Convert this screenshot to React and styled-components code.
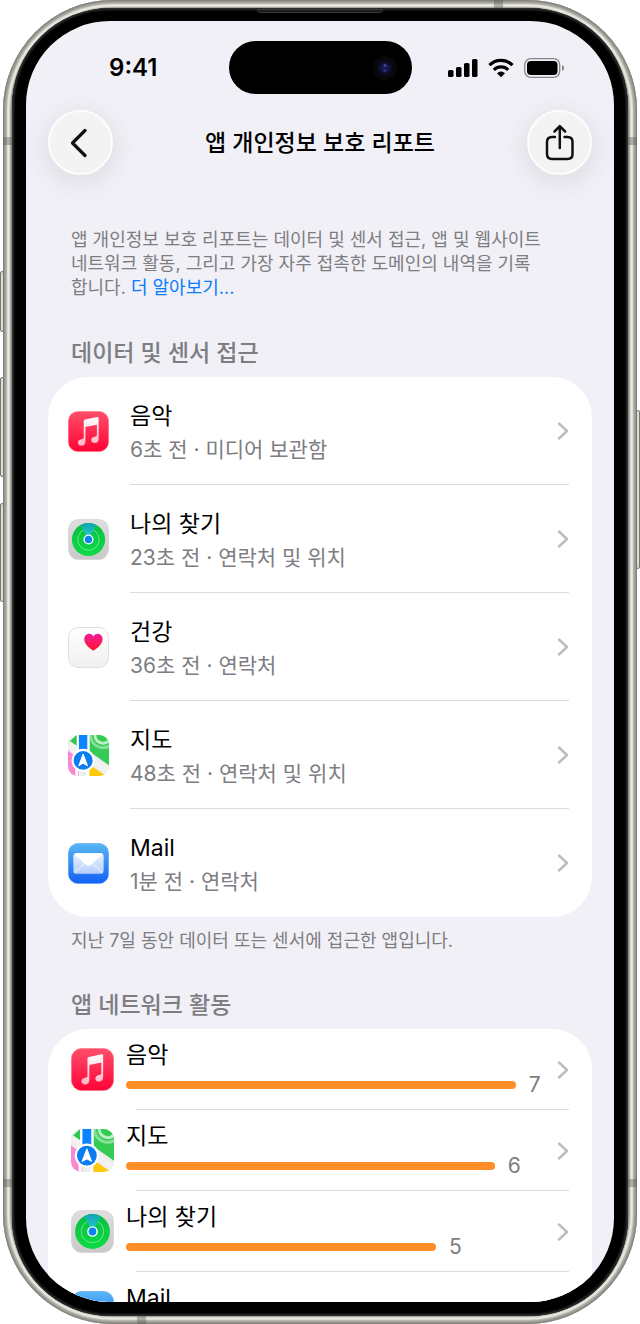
import React from 'react'
import styled, { createGlobalStyle } from 'styled-components';

const GlobalStyle = createGlobalStyle`
  * {
    box-sizing: border-box;
  }

  body {
    margin: 0;
    background: #ffffff;
    color: #000000;
    font-family: Inter, "Noto Sans CJK KR", sans-serif;
  }
`;

const Device = styled.div`
  position: relative;
  height: 100vh;
  min-height: 640px;
  margin: 0 3px;
  padding: 8px 9px;
  border-radius: 110px;
  background: #8b8a84;
  box-shadow: inset 0 0 2px 1px #77766f, inset 0 0 2px 4px #a3a29c, inset 0 0 2px 7px #f4f3ea;
`;

const Bezel = styled.div`
  height: 100%;
  padding: 13px 14px 14px;
  border-radius: 98px;
  background: #000000;
  box-shadow: inset 0 0 2px 2px #2c2e2c;
`;

const Screen = styled.div`
  height: 100%;
  padding: 0 22px;
  border-radius: 84px;
  background: #f1f0f6;
  overflow: hidden;
`;

const SideKey = styled.span`
  position: absolute;
  top: ${props => props.$top};
  ${props => props.$side}: -3px;
  width: 4px;
  height: ${props => props.$length};
  border: 1px solid #77766f;
  border-radius: 2px;
  background: #deddd5;
`;

const Antenna = styled.span`
  position: absolute;
  top: ${props => props.$top};
  bottom: ${props => props.$bottom};
  left: ${props => props.$left};
  right: ${props => props.$right};
  width: 9px;
  height: 8px;
  background: rgba(90, 90, 84, .4);
`;

const Speaker = styled.span`
  position: absolute;
  top: 9px;
  left: 40%;
  right: 40%;
  height: 4px;
  border: 1px solid #3a3a3a;
  border-radius: 0 0 3px 3px;
  background: #1b1b1b;
`;

const StatusBar = styled.div`
  display: grid;
  grid-template-columns: 1fr 183px 1fr;
  align-items: center;
  padding-top: 20px;
`;

const Time = styled.time`
  justify-self: center;
  padding-right: 10px;
  font-size: 24px;
  font-weight: 600;
  line-height: 32px;
`;

const Island = styled.div`
  display: flex;
  align-items: center;
  justify-content: flex-end;
  height: 53px;
  padding-right: 14px;
  border-radius: 27px;
  background: #000000;
`;

const StatusIcons = styled.div`
  display: flex;
  align-items: center;
  gap: 10px;
  justify-self: end;
  padding-right: 27px;
`;

const NavBar = styled.header`
  display: flex;
  align-items: center;
  justify-content: space-between;
  margin-top: 16px;
`;

const NavTitle = styled.h1`
  margin: 0;
  font-size: 23px;
  font-weight: 500;
  line-height: 34px;
`;

const RoundButton = styled.button`
  display: flex;
  align-items: center;
  justify-content: center;
  width: 65px;
  height: 65px;
  padding: 0;
  border: 2px solid #fdfdfd;
  border-radius: 50%;
  background: #f3f3f3;
  box-shadow: 0 6px 28px rgba(60, 60, 80, .13);
`;

const Intro = styled.p`
  margin: 53px 23px 0;
  color: #7d7d82;
  font-size: 18px;
  line-height: 24px;
  word-break: keep-all;
`;

const MoreLink = styled.a`
  color: #0a7aff;
  text-decoration: none;
`;

const SectionTitle = styled.h2`
  margin: ${props => props.$top} 23px 7px;
  color: #7d7d82;
  font-size: 23px;
  font-weight: 500;
  line-height: 34px;
`;

const Card = styled.ul`
  margin: 0;
  padding: 0;
  border-radius: 40px;
  background: #ffffff;
  list-style: none;
`;

const Row = styled.li`
  position: relative;

  &:not(:last-child)::after {
    content: "";
    position: absolute;
    right: 23px;
    bottom: 0;
    left: ${props => props.$inset};
    height: 1px;
    background: #dcdcde;
  }
`;

const AccessLink = styled.a`
  display: grid;
  grid-template-columns: 41px 1fr 12px;
  align-items: center;
  column-gap: 21px;
  height: 108px;
  padding: 0 23px 0 20px;
  color: inherit;
  text-decoration: none;
`;

const NetworkLink = styled(AccessLink)`
  grid-template-columns: 43px 1fr 12px;
  column-gap: 12px;
  height: 81px;
  padding-left: 23px;
`;

const AccessText = styled.div`
  padding-top: 4px;
`;

const AppName = styled.div`
  font-size: 23px;
  line-height: ${props => props.$line};
`;

const Detail = styled.div`
  color: #7d7d82;
  font-size: 21px;
  line-height: 34px;
`;

const Meter = styled.div`
  display: flex;
  align-items: center;
  gap: 13px;
  height: 30px;
  color: #7d7d82;
  font-size: 21px;
`;

const Bar = styled.div`
  flex: none;
  height: 8px;
  border-radius: 4px;
  background: #ff8d28;
`;

const Footnote = styled.p`
  margin: 11px 23px 0;
  color: #7d7d82;
  font-size: 18px;
  line-height: 26px;
`;

const Icon = styled.svg`
  display: block;
  width: 100%;
`;

const MusicIcon = () => (
  <Icon viewBox="0 0 42 42" aria-hidden="true">
    <defs>
      <linearGradient id="music" x1="0" y1="0" x2="0" y2="1">
        <stop offset="0" stopColor="#ff4e6b" />
        <stop offset="1" stopColor="#ff0436" />
      </linearGradient>
      <linearGradient id="note" x1="0" y1="0" x2="0" y2="1">
        <stop offset="0" stopColor="#fff" />
        <stop offset="1" stopColor="#ffb5c3" />
      </linearGradient>
    </defs>
    <rect x=".4" y=".4" width="41.2" height="41.2" rx="10" fill="url(#music)" stroke="#ff6a82" strokeWidth=".6" />
    <path
      fill="url(#note)"
      d="M17.3 8.7 30.2 6.2q1.2-.2 1.2 1v21.1c0 3-1.9 4.5-4.2 4.5-2 0-3.4-1.3-3.4-3.1 0-2 1.5-3 3.5-3.4 1.7-.4 2.3-.7 2.3-2V14.1L17.9 16.5v14.7c0 2.8-1.9 4.4-4.2 4.4-2 0-3.5-1.3-3.5-3.1 0-2 1.5-3.1 3.6-3.5 1.7-.3 2.3-.7 2.3-2V10.2q0-1.2 1.2-1.5z"
    />
  </Icon>
)

const FindIcon = () => (
  <Icon viewBox="0 0 42 42" aria-hidden="true">
    <defs>
      <linearGradient id="findCase" x1="0" y1="0" x2="0" y2="1">
        <stop offset="0" stopColor="#dedede" />
        <stop offset="1" stopColor="#c9c9c9" />
      </linearGradient>
      <linearGradient id="findDisc" x1="0" y1="0" x2="0" y2="1">
        <stop offset="0" stopColor="#08bd42" />
        <stop offset="1" stopColor="#0edb45" />
      </linearGradient>
      <linearGradient id="beam" x1="0" y1="0" x2="0" y2="1">
        <stop offset="0" stopColor="#12a3b4" />
        <stop offset="1" stopColor="#22d4c8" />
      </linearGradient>
    </defs>
    <rect x=".5" y=".5" width="41" height="41" rx="10" fill="url(#findCase)" stroke="#cfcfcf" strokeWidth=".6" />
    <circle cx="21" cy="21" r="17" fill="url(#findDisc)" />
    <circle cx="21" cy="21" r="11" fill="none" stroke="#7df09b" strokeWidth=".8" />
    <path d="M21 21 13 6q8-4 16 0z" fill="url(#beam)" />
    <circle cx="21" cy="21" r="5.2" fill="#fff" />
    <circle cx="21" cy="21" r="3.8" fill="#0a84f0" />
  </Icon>
)

const HealthIcon = () => (
  <Icon viewBox="0 0 42 42" aria-hidden="true">
    <defs>
      <linearGradient id="healthCase" x1="0" y1="0" x2="0" y2="1">
        <stop offset="0" stopColor="#fff" />
        <stop offset="1" stopColor="#efefef" />
      </linearGradient>
      <linearGradient id="heart" x1="0" y1="0" x2="0" y2="1">
        <stop offset="0" stopColor="#f51d9d" />
        <stop offset="1" stopColor="#ff1528" />
      </linearGradient>
    </defs>
    <rect x=".5" y=".5" width="41" height="41" rx="10" fill="url(#healthCase)" stroke="#dedede" />
    <path
      fill="url(#heart)"
      d="M26 24.3c-5-3.4-9.3-7.1-9.3-11.8 0-3.2 2.1-5.5 4.8-5.5 2 0 3.6 1.1 4.5 2.8C26.9 8.1 28.5 7 30.5 7c2.7 0 4.9 2.3 4.9 5.5 0 4.7-4.4 8.4-9.4 11.8z"
    />
  </Icon>
)

const MapsIcon = () => (
  <Icon viewBox="0 0 42 42" aria-hidden="true">
    <defs>
      <clipPath id="mapClip">
        <rect width="42" height="42" rx="10" />
      </clipPath>
    </defs>
    <g clipPath="url(#mapClip)">
      <rect width="42" height="42" fill="#ededed" />
      <path d="M0 8 9 0v13z" fill="#2cc74f" />
      <path d="M22 0h20v31L22 17z" fill="#35cb55" />
      <g fill="none">
        <circle cx="36" cy="0" r="13" stroke="#84e198" strokeWidth="3" />
        <circle cx="36" cy="0" r="8.5" stroke="#b9efc4" strokeWidth="3" />
      </g>
      <path d="M0 16 11 24v18H0z" fill="#f888d2" />
      <path d="M0 9 42 38" stroke="#f2f2f2" strokeWidth="7" />
      <path d="M9 26v16M20 30v12" stroke="#fff" strokeWidth="3" />
      <path d="M22 42v-8l4-1 13 9z" fill="#ffc80a" />
      <path d="M11 0h9v20h-9z" fill="#0a84ff" />
      <path d="M10 0v19M21 0v19" stroke="#fff" strokeWidth="2" />
    </g>
    <circle cx="15.5" cy="26" r="11.8" fill="#fff" />
    <circle cx="15.5" cy="26" r="9.7" fill="#0a7cf2" />
    <path d="m15.5 19.500 4.500 12-4.500-2.500-4.500 2.500z" fill="#fff" stroke="#fff" strokeLinejoin="round" />
  </Icon>
)

const MailIcon = () => (
  <Icon viewBox="0 0 42 42" aria-hidden="true">
    <defs>
      <linearGradient id="mailCase" x1="0" y1="0" x2="0" y2="1">
        <stop offset="0" stopColor="#58b7f4" />
        <stop offset="1" stopColor="#1360f4" />
      </linearGradient>
      <linearGradient id="paper" x1="0" y1="0" x2="0" y2="1">
        <stop offset="0" stopColor="#e6f1ff" />
        <stop offset="1" stopColor="#b7cdfa" />
      </linearGradient>
    </defs>
    <rect x=".4" y=".4" width="41.2" height="41.2" rx="10" fill="url(#mailCase)" stroke="#4d9ff5" strokeWidth=".6" />
    <rect x="5.5" y="10.5" width="31" height="21" rx="3" fill="url(#paper)" />
    <path d="m6.500 30.500 11-10M35.500 30.500l-11-10" stroke="#f3f8ff" />
    <path d="m6.300 11.300 11.700 10.800q3 2.700 6 0l11.700-10.800q-.8-.8-2.200-.8h-25q-1.400 0-2.200.8z" fill="#fff" />
  </Icon>
)

const Chevron = () => (
  <svg width="12" height="18" viewBox="0 0 12 18" fill="none" aria-hidden="true">
    <path d="m2 1.500 8 7.500-8 7.500" stroke="#bcbcbf" strokeWidth="2.4" strokeLinecap="round" strokeLinejoin="round" />
  </svg>
)

const accessApps = [
  { name: '음악', detail: '6초 전 · 미디어 보관함', AppIcon: MusicIcon },
  { name: '나의 찾기', detail: '23초 전 · 연락처 및 위치', AppIcon: FindIcon },
  { name: '건강', detail: '36초 전 · 연락처', AppIcon: HealthIcon },
  { name: '지도', detail: '48초 전 · 연락처 및 위치', AppIcon: MapsIcon },
  { name: 'Mail', detail: '1분 전 · 연락처', AppIcon: MailIcon },
];

const networkApps = [
  { name: '음악', count: 7, share: 93, AppIcon: MusicIcon },
  { name: '지도', count: 6, share: 88, AppIcon: MapsIcon },
  { name: '나의 찾기', count: 5, share: 74, AppIcon: FindIcon },
  { name: 'Mail', AppIcon: MailIcon },
];

const App = () => {
  return (
    <>
      <GlobalStyle />
      <Device>
        <SideKey $side="left" $top="20.5%" $length="4.6%" />
        <SideKey $side="left" $top="28.5%" $length="7.5%" />
        <SideKey $side="left" $top="38%" $length="7.5%" />
        <SideKey $side="right" $top="31%" $length="12%" />
        <Bezel>
          <Screen>
            <StatusBar>
              <Time>9:41</Time>
              <Island>
                <svg width="26" height="26" viewBox="0 0 26 26" aria-hidden="true">
                  <circle cx="13" cy="13" r="12" fill="#08070c" />
                  <circle cx="13" cy="13" r="7.5" fill="#0e0d26" />
                  <circle cx="13" cy="13" r="4.5" fill="#17164f" />
                  <circle cx="13" cy="10.5" r="1.5" fill="#3f4690" />
                  <circle cx="13" cy="15.5" r="1.5" fill="#2b2f80" />
                </svg>
              </Island>
              <StatusIcons>
                <svg width="30" height="20" viewBox="0 0 30 20" aria-hidden="true">
                  <rect x="0" y="12" width="5.5" height="7" rx="1.5" />
                  <rect x="8" y="9" width="5.5" height="10" rx="1.5" />
                  <rect x="16" y="5" width="5.5" height="14" rx="1.5" />
                  <rect x="24" y="1" width="5.5" height="18" rx="1.5" />
                </svg>
                <svg width="26" height="20" viewBox="0 0 26 20" fill="none" stroke="#000" strokeWidth="3.2" aria-hidden="true">
                  <path d="M1.5 7.2a16.3 16.3 0 0 1 23 0" />
                  <path d="M5.8 11.8a10.3 10.3 0 0 1 14.4 0" />
                  <path d="M9 15.2a5.8 5.8 0 0 1 8 0l-4 4z" fill="#000" stroke="none" />
                </svg>
                <svg width="41" height="20" viewBox="0 0 41 20" aria-hidden="true">
                  <rect x=".7" y=".7" width="35" height="18.6" rx="6" fill="none" stroke="#88888c" strokeWidth="1.3" />
                  <rect x="3" y="3" width="30.5" height="14" rx="4" />
                  <path d="M38 7q2.2 1 2.2 3T38 13z" fill="#88888c" />
                </svg>
              </StatusIcons>
            </StatusBar>
            <NavBar>
              <RoundButton type="button" aria-label="뒤로">
                <svg width="20" height="30" viewBox="0 0 20 30" fill="none" aria-hidden="true">
                  <path d="M14 2.5 1.5 15 14 27.5" stroke="#111" strokeWidth="3.2" strokeLinecap="round" strokeLinejoin="round" />
                </svg>
              </RoundButton>
              <NavTitle>앱 개인정보 보호 리포트</NavTitle>
              <RoundButton type="button" aria-label="공유">
                <svg width="30" height="38" viewBox="0 0 30 38" fill="none" stroke="#111" strokeWidth="2.5" strokeLinecap="round" strokeLinejoin="round" aria-hidden="true">
                  <path d="M10 13H7q-5 0-5 5v12q0 5 5 5h15.5q5 0 5-5V18q0-5-5-5h-3" />
                  <path d="M14.8 24V2.5M9.5 7.500l5.300-5.300 5.300 5.300" />
                </svg>
              </RoundButton>
            </NavBar>
            <Intro>
              앱 개인정보 보호 리포트는 데이터 및 센서 접근, 앱 및 웹사이트<br />
              네트워크 활동, 그리고 가장 자주 접촉한 도메인의 내역을 기록<br />
              합니다. <MoreLink href="#more">더 알아보기...</MoreLink>
            </Intro>
            <SectionTitle $top="36px">데이터 및 센서 접근</SectionTitle>
            <Card>
              {accessApps.map(({ name, detail, AppIcon }) => (
                <Row key={name} $inset="82px">
                  <AccessLink href="#access">
                    <AppIcon />
                    <AccessText>
                      <AppName $line="34px">{name}</AppName>
                      <Detail>{detail}</Detail>
                    </AccessText>
                    <Chevron />
                  </AccessLink>
                </Row>
              ))}
            </Card>
            <Footnote>지난 7일 동안 데이터 또는 센서에 접근한 앱입니다.</Footnote>
            <SectionTitle $top="34px">앱 네트워크 활동</SectionTitle>
            <Card>
              {networkApps.map(({ name, count, share, AppIcon }) => (
                <Row key={name} $inset="88px">
                  <NetworkLink href="#network">
                    <AppIcon />
                    <div>
                      <AppName $line="30px">{name}</AppName>
                      <Meter>
                        {count && <Bar style={{ width: `${share}%` }} />}
                        <span>{count}</span>
                      </Meter>
                    </div>
                    <Chevron />
                  </NetworkLink>
                </Row>
              ))}
            </Card>
          </Screen>
        </Bezel>
        <Speaker />
        <Antenna $top="137px" $left="0" />
        <Antenna $top="137px" $right="0" />
        <Antenna $bottom="137px" $left="0" />
        <Antenna $bottom="137px" $right="0" />
        <Antenna $top="0" $right="134px" />
        <Antenna $bottom="0" $left="134px" />
      </Device>
    </>
  )
}

export default App
